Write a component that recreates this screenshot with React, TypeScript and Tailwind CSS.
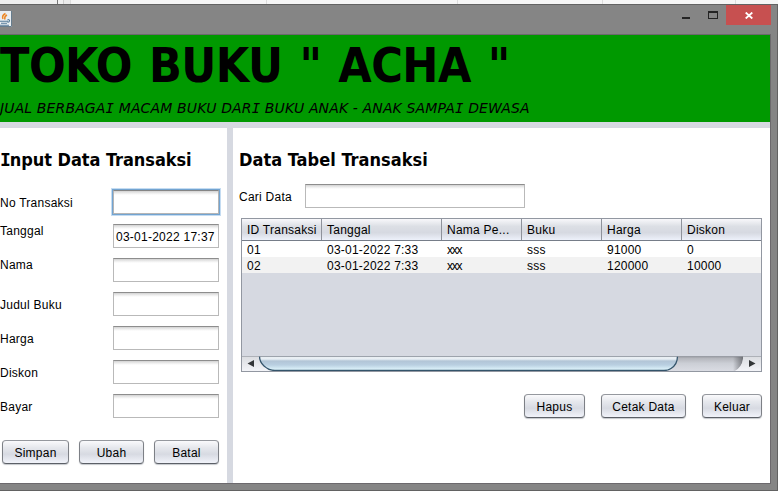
import React from "react";

const sans = "font-['Liberation_Sans',Arial,sans-serif]";
const tahoma = "font-['DejaVu_Sans_Condensed','DejaVu_Sans',sans-serif]";

// Capital I with slab serifs, set from the monospaced companion face.
function SlabI({ className = "" }: { className?: string }) {
  return <span className={`font-['DejaVu_Sans_Mono',monospace] ${className}`}>I</span>;
}

function Field({ className = "", value = "", focused = false }: { className?: string; value?: string; focused?: boolean }) {
  return (
    <div
      className={`flex h-6 shrink-0 items-center border pl-[2px] pt-[2px] whitespace-nowrap bg-[linear-gradient(#d2d2d2_0,#ececec_2px,#ffffff_4px)] ${
        focused
          ? "border-[#b5b5b5] border-t-[#858585] shadow-[0_0_0_1px_#73a4d1,0_0_0_2px_#c4dcf2]"
          : "border-[#b9b9b9] border-t-[#8d8d8d]"
      } ${className}`}
    >
      {value}
    </div>
  );
}

function Button({ label, className }: { label: string; className: string }) {
  return (
    <button
      className={`flex h-6 shrink-0 items-center justify-center rounded-[4px] border border-[#7d8086] border-t-[#95989e] border-b-[#5c6067] bg-[linear-gradient(#fafafc_0%,#e6e8ed_30%,#d7dae2_60%,#f1f3fa_100%)] pt-[2px] shadow-[0_1px_1px_#c5c8cd] ${className}`}
    >
      {label}
    </button>
  );
}

const fields = [
  { label: "No Transaksi", shift: "mt-[2px]", focused: true },
  { label: "Tanggal", shift: "mb-[10px]", value: "03-01-2022 17:37" },
  { label: "Nama", shift: "mb-[10px]" },
  { label: "Judul Buku", shift: "mt-[2px]" },
  { label: "Harga", shift: "mt-[2px]" },
  { label: "Diskon", shift: "mt-[2px]" },
  { label: "Bayar", shift: "mt-[2px]" },
];

const columns = ["ID Transaksi", "Tanggal", "Nama Pe...", "Buku", "Harga", "Diskon"];
const rows = [
  ["01", "03-01-2022 7:33", "xxx", "sss", "91000", "0"],
  ["02", "03-01-2022 7:33", "xxx", "sss", "120000", "10000"],
];
const grid = "grid grid-cols-[80px_120px_80px_80px_80px_79px]";

function JavaIcon() {
  return (
    <svg width="12" height="16" viewBox="0 0 12 16" className="block">
      <rect x="-4" y="0" width="16" height="16" fill="#e9eef2" />
      <path d="M11.500 0v15.500H0" fill="none" stroke="#667c8d" />
      <path d="M5.500 2.500Q1.500 4.500 3 8M7 4Q4 5.500 5 8.500" fill="none" stroke="#ec8725" strokeWidth="1.500" />
      <path d="M0 10.200h8M1 12.200h6M0 14.200h9M7.500 8.700c3 -.5 2.500 2.300 0 2.800" fill="none" stroke="#557b99" strokeWidth="1.100" />
    </svg>
  );
}

function ScrollBar() {
  return (
    <svg width="519" height="15" viewBox="0 0 519 15" className="block">
      <defs>
        <linearGradient id="track" x1="0" y1="0" x2="0" y2="1">
          <stop offset="0" stopColor="#8f9197" />
          <stop offset=".15" stopColor="#b4b6bc" />
          <stop offset=".5" stopColor="#cccfd6" />
          <stop offset="1" stopColor="#dadce3" />
        </linearGradient>
        <linearGradient id="thumb" x1="0" y1="0" x2="0" y2="1">
          <stop offset="0" stopColor="#a9bdcb" />
          <stop offset=".08" stopColor="#f1f5f8" />
          <stop offset=".2" stopColor="#e1e9f0" />
          <stop offset=".32" stopColor="#b2c5d6" />
          <stop offset=".6" stopColor="#b9cfe1" />
          <stop offset="1" stopColor="#e4faff" />
        </linearGradient>
        <linearGradient id="cap" x1="0" y1="0" x2="0" y2="1">
          <stop offset="0" stopColor="#dadce0" />
          <stop offset="1" stopColor="#f3f4f8" />
        </linearGradient>
        <linearGradient id="shade" x1="0" y1="0" x2="1" y2="0">
          <stop offset="0" stopColor="#55575c" stopOpacity="0" />
          <stop offset="1" stopColor="#55575c" />
        </linearGradient>
      </defs>
      <rect width="519" height="15" fill="url(#track)" />
      <path d="M0 0H18Q19 12 34 15H0Z" fill="url(#cap)" />
      <path d="M491 0H501V3Q500 11 493 15H491Z" fill="url(#shade)" opacity=".7" />
      <path d="M519 0H501V3Q500 11 493 15H519Z" fill="url(#cap)" />
      <path d="M17.500 .5H435.500V3Q435 9 429 12.500Q426 14.500 422 14.500H33Q27 14.500 22 10Q17.500 6 17.500 .5Z" fill="url(#thumb)" />
      <path d="M17.500 0Q17.500 6 22 10Q27 14.500 33 14.500H422Q426 14.500 429 12.500Q435.500 8.500 435.500 0" fill="none" stroke="#34546b" strokeWidth="1.300" />
      <path d="M0 .5H519" stroke="#9ca0a8" opacity=".7" />
      <path d="M5.500 7.500l6.500-3.500v7zM513.500 7.500l-6.500-3.500v7z" fill="#333638" />
    </svg>
  );
}

export default function App() {
  return (
    <div className={`flex h-[491px] w-[778px] flex-col overflow-hidden bg-[#858585] text-[12px] leading-[14px] tracking-[0.25px] text-black ${sans}`}>
      <div className="flex h-1 shrink-0 bg-[#f5f5f5]">
        <div className="w-[58px] border-r border-[#777] bg-[#eee]" />
        <div className="w-[6px] border-r border-[#ccc] bg-[#eee]" />
        <div className="w-[7px] border-r border-[#ddd] bg-[#e9e9e9]" />
        <div className="w-[196px] border-r border-[#dcdcdc]" />
        <div className="w-[191px] border-r border-[#dcdcdc]" />
        <div className="w-[145px] border-r border-[#dcdcdc]" />
        <div className="w-[133px] border-r border-[#dcdcdc]" />
      </div>
      <div className="flex min-h-0 flex-1 flex-col border-t border-r border-b border-[#626262] pr-[6px] pb-[6px]">
        <div className="flex h-[29px] shrink-0 items-start">
          <div className="mt-[6px]"><JavaIcon /></div>
          <svg className="ml-auto" width="45" height="20" viewBox="0 0 45 20">
            <path d="M1 12h8v2H1z" fill="#242424" />
            <path fillRule="evenodd" d="M27 6h10v8H27zM28 8v5h8V8z" fill="#242424" />
          </svg>
          <div className="flex h-5 w-[45px] items-center justify-center bg-[#c75050]">
            <svg width="8" height="7" viewBox="0 0 8 7"><path d="M.7 .5L7.300 6.500M7.300 .5L.7 6.500" stroke="#fff" strokeWidth="1.800" /></svg>
          </div>
        </div>
        <div className="flex min-h-0 flex-1 flex-col border-t border-r border-b border-[#6c696d] bg-[#d6d9e1]">
          <header className={`h-[87px] shrink-0 bg-[#009900] whitespace-nowrap ${tahoma}`}>
            <h1 className="text-[48px] leading-[60px] font-bold tracking-[-0.55px] [word-spacing:2.5px]">TOKO BUKU " ACHA "</h1>
            <p className="mt-[5px] font-['DejaVu_Sans',sans-serif] text-[14px] leading-4 italic tracking-[0.13px]">
              JUAL BERBAGA<SlabI /> MACAM BUKU DAR<SlabI /> BUKU ANAK - ANAK SAMPA<SlabI /> DEWASA
            </p>
          </header>
          <main className="mt-[6px] flex min-h-0 flex-1 gap-[6px]">
            <section className="flex w-[227px] flex-col bg-white">
              <h2 className={`mt-5 h-[22px] text-[18px] leading-[24px] font-bold whitespace-nowrap tracking-[-0.05px] ${tahoma}`}>
                <SlabI className="-mr-px" />nput Data Transaksi
              </h2>
              <div className="mt-[15px] flex flex-col">
                {fields.map((f) => (
                  <label key={f.label} className="flex h-[34px] w-[219px] items-center justify-between">
                    <span className={f.shift}>{f.label}</span>
                    <Field className="w-[106px]" value={f.value} focused={f.focused} />
                  </label>
                ))}
              </div>
              <div className="mt-[17px] flex gap-[10px] pl-[2px]">
                <Button label="Simpan" className="w-[67px]" />
                <Button label="Ubah" className="w-[65px]" />
                <Button label="Batal" className="w-[65px]" />
              </div>
            </section>
            <section className="flex flex-1 flex-col bg-white pl-[6px]">
              <h2 className={`mt-5 h-[22px] text-[18px] leading-[24px] font-bold whitespace-nowrap tracking-[0.03px] ${tahoma}`}>
                Data Tabel Transaksi
              </h2>
              <label className="mt-[14px] flex h-6 items-center">
                <span className="w-[66px] pt-[2px]">Cari Data</span>
                <Field className="w-[220px]" />
              </label>
              <div className="mt-[10px] ml-[2px] flex h-[154px] w-[521px] flex-col border border-[#9297a1] bg-[#d6d9e1]">
                <div className={`${grid} h-[22px] shrink-0 border-b border-[#767d89] bg-[linear-gradient(#f8f8fb_0%,#dcdfe5_35%,#d6d9e1_65%,#edf1fb_100%)]`}>
                  {columns.map((c) => (
                    <div key={c} className="border-r border-[#8e929b] pt-[4px] pl-[5px] whitespace-nowrap last:border-r-0">{c}</div>
                  ))}
                </div>
                {rows.map((r, i) => (
                  <div key={i} className={`${grid} h-4 shrink-0 ${i ? "bg-[#f2f2f2]" : "bg-white"}`}>
                    {r.map((c, j) => (
                      <div key={j} className={`pt-[2px] pl-[5px] whitespace-nowrap ${c === "xxx" ? "tracking-[-1.2px]" : "tracking-[0.22px]"}`}>{c}</div>
                    ))}
                  </div>
                ))}
                <div className="mt-auto"><ScrollBar /></div>
              </div>
              <div className="mt-[22px] flex justify-end gap-4 pr-2">
                <Button label="Hapus" className="w-[61px]" />
                <Button label="Cetak Data" className="w-[85px]" />
                <Button label="Keluar" className="w-[60px]" />
              </div>
            </section>
          </main>
        </div>
      </div>
    </div>
  );
}
